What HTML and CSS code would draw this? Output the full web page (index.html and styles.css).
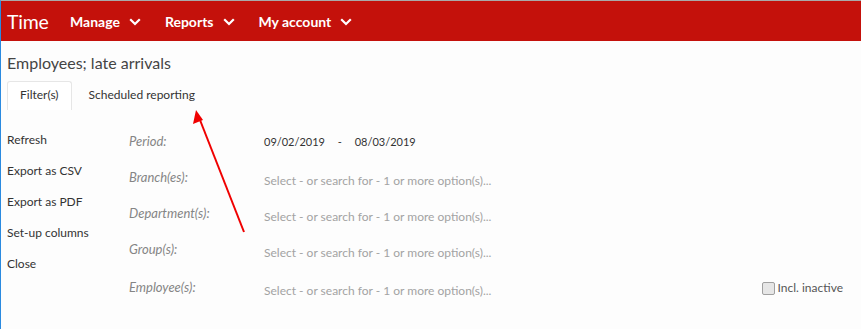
FILE: index.html
```html
<!DOCTYPE html>
<html>
<head>
<meta charset="utf-8">
<link rel="stylesheet" href="styles.css">
</head>
<body>
<div class="frame">
  <header class="topbar">
    <div class="brand">Time</div>
    <nav class="nav">
      <div class="nav-item">Manage <svg class="chev" viewBox="0 0 12 8" width="12" height="8"><path d="M1.2 1.2 L6 6 L10.8 1.2" fill="none" stroke="#fff" stroke-width="2.2"/></svg></div>
      <div class="nav-item">Reports <svg class="chev" viewBox="0 0 12 8" width="12" height="8"><path d="M1.2 1.2 L6 6 L10.8 1.2" fill="none" stroke="#fff" stroke-width="2.2"/></svg></div>
      <div class="nav-item">My account <svg class="chev" viewBox="0 0 12 8" width="12" height="8"><path d="M1.2 1.2 L6 6 L10.8 1.2" fill="none" stroke="#fff" stroke-width="2.2"/></svg></div>
    </nav>
  </header>
  <main class="content">
    <h1 class="title">Employees; late arrivals</h1>
    <div class="tabs">
      <div class="tab active">Filter(s)</div>
      <div class="tab">Scheduled reporting</div>
    </div>
    <div class="body">
      <ul class="actions">
        <li>Refresh</li>
        <li>Export as CSV</li>
        <li>Export as PDF</li>
        <li>Set-up columns</li>
        <li>Close</li>
      </ul>
      <div class="filters">
        <div class="row">
          <div class="label">Period:</div>
          <div class="value dates">09/02/2019 <span class="dash">-</span> 08/03/2019</div>
        </div>
        <div class="row">
          <div class="label">Branch(es):</div>
          <div class="value placeholder">Select - or search for - 1 or more option(s)...</div>
        </div>
        <div class="row">
          <div class="label">Department(s):</div>
          <div class="value placeholder">Select - or search for - 1 or more option(s)...</div>
        </div>
        <div class="row">
          <div class="label">Group(s):</div>
          <div class="value placeholder">Select - or search for - 1 or more option(s)...</div>
        </div>
        <div class="row last">
          <div class="label">Employee(s):</div>
          <div class="value placeholder">Select - or search for - 1 or more option(s)...</div>
          <label class="incl"><span class="box"></span>Incl. inactive</label>
        </div>
      </div>
    </div>
  </main>
  <svg class="arrow" width="861" height="329" viewBox="0 0 861 329">
    <line x1="244" y1="232" x2="200" y2="120" stroke="#f00000" stroke-width="2"/>
    <polygon points="196,110 193,124 203,120" fill="#f00000"/>
  </svg>
</div>
</body>
</html>
```

FILE: styles.css
```css
html, body {
  margin: 0;
  padding: 0;
  background: #fff;
}
body {
  font-family: Lato, "Liberation Sans", sans-serif;
  width: 861px;
  height: 329px;
  overflow: hidden;
}
.frame {
  position: relative;
  width: 860px;
  height: 328px;
  border-top: 1px solid #a9a9a9;
  border-left: 1px solid #2a8ae0;
  background: #fdfdfd;
}
.topbar {
  height: 40px;
  background: #c4110b;
  display: flex;
  align-items: center;
  color: #fff;
}
.brand {
  font-size: 19.5px;
  padding-left: 6px;
  width: 63px;
  letter-spacing: -0.2px;
}
.nav {
  display: flex;
  gap: 24px;
}
.nav-item {
  font-size: 14px;
  font-weight: bold;
  display: flex;
  align-items: center;
  gap: 9px;
}
.chev { margin-top: 1px; }
.content {
  padding: 0 0 0 6px;
}
.title {
  margin: 12px 0 8px 0;
  font-size: 16px;
  font-weight: normal;
  color: #444;
  line-height: 20px;
}
.tabs {
  display: flex;
  height: 29px;
}
.tab {
  font-size: 12px;
  color: #333;
  padding: 0 12px;
  line-height: 26px;
  border: 1px solid transparent;
  border-bottom: none;
}
.tab.active {
  border-color: #e6e6e6;
  border-radius: 3px 3px 0 0;
  background: #fff;
  margin-right: 4px;
}
.body {
  display: flex;
  margin-top: 22px;
}
.actions {
  list-style: none;
  margin: 0;
  padding: 0;
  width: 122px;
}
.actions li {
  font-size: 12px;
  color: #333;
  height: 31px;
  line-height: 16px;
}
.filters {
  flex: 1;
  display: flex;
  flex-direction: column;
}
.row {
  display: flex;
  height: 36px;
  line-height: 16px;
  font-size: 12px;
}
.row.last { padding-top: 2px; }
.label {
  width: 135px;
  font-size: 13px;
  font-style: italic;
  color: #858585;
  padding-top: 1px;
}
.value { color: #333; }
.dates { font-size: 11px; padding-top: 2px; }
.dash { margin: 0 10px; }
.placeholder {
  color: #a3a3a3;
  padding-top: 5px;
}
.incl {
  margin-left: auto;
  margin-right: 18px;
  display: flex;
  align-items: center;
  gap: 3px;
  color: #555;
  height: 16px;
  padding-top: 2px;
}
.box {
  width: 11px;
  height: 11px;
  border: 1px solid #a0a0a0;
  border-radius: 2px;
  background: #e6e6e6;
}
.arrow {
  position: absolute;
  left: -1px;
  top: -1px;
  pointer-events: none;
}
```
